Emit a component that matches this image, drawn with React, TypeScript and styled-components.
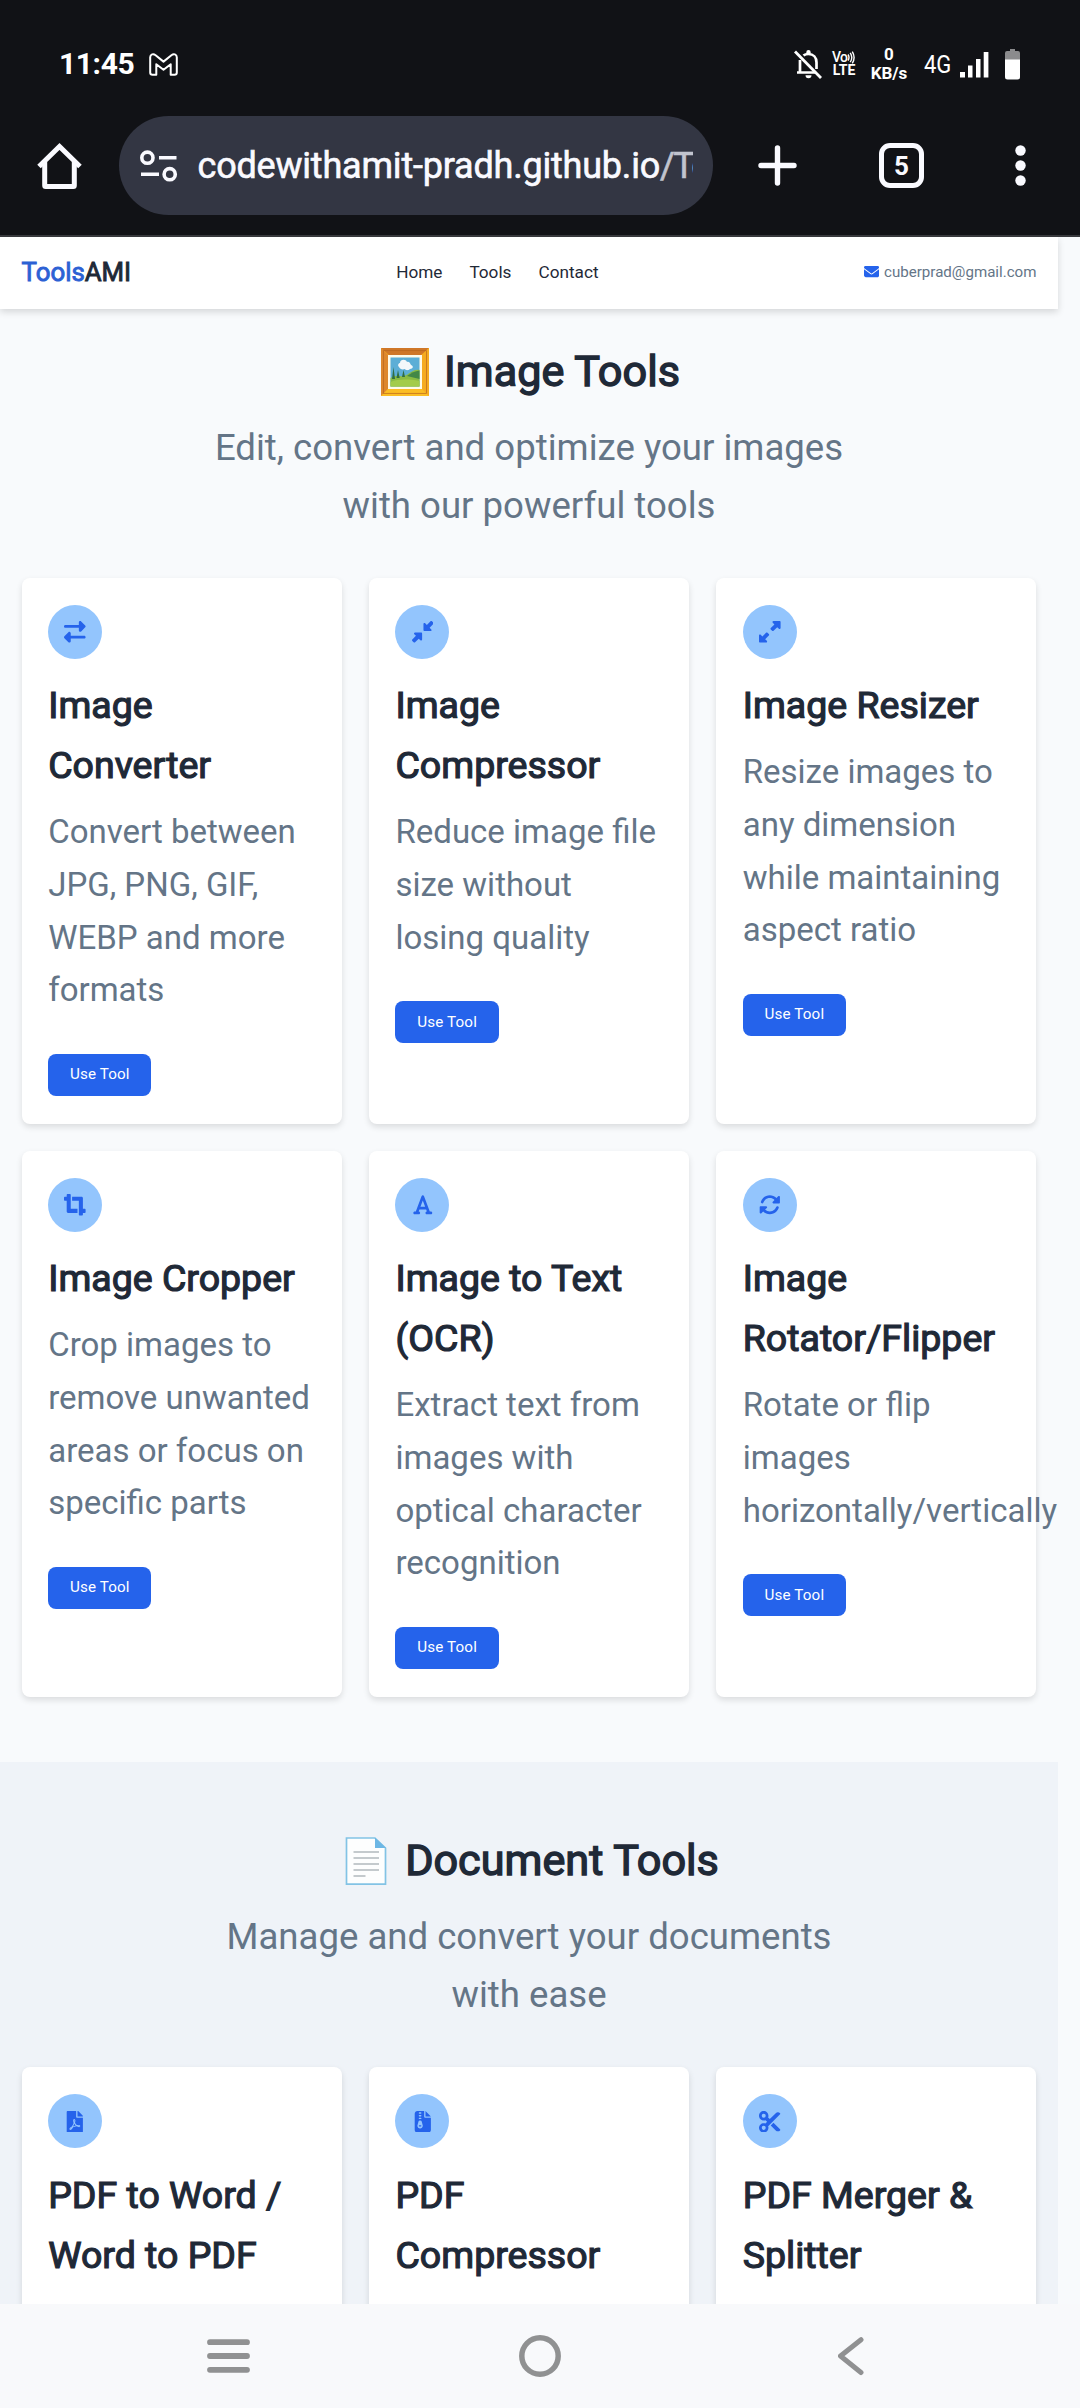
import React from "react";
import styled, { createGlobalStyle } from "styled-components";
import { FaCropAlt, FaFilePdf } from "react-icons/fa";
import {
  FaRightLeft,
  FaDownLeftAndUpRightToCenter,
  FaUpRightAndDownLeftFromCenter,
  FaFont,
  FaRotate,
  FaFileZipper,
  FaScissors,
  FaEnvelope,
} from "react-icons/fa6";

const GlobalStyle = createGlobalStyle`
  *, *::before, *::after { box-sizing: border-box; }
  body { margin: 0; background: #f8fafc; font-family: Roboto, "Liberation Sans", sans-serif; }
  h1, h2, h3, p { margin: 0; font-weight: 400; }
  svg { display: block; flex: none; }
`;

const Screen = styled.div`
  display: flex;
  flex-direction: column;
  width: 1080px;
  height: 2408px;
  overflow: hidden;
  background: #f8fafc;
`;

const BrowserChrome = styled.div`
  flex: none;
  height: 237px;
  background: #111216;
  border-bottom: 2px solid #37383c;
  color: #fff;
`;

const StatusBar = styled.div`
  display: flex;
  align-items: center;
  height: 116px;
  padding: 12px 60px 0 59px;
`;

const Clock = styled.span`
  font-size: 30px;
  font-weight: 700;
  line-height: 30px;
  width: 90px;
  letter-spacing: -0.4px;
`;

const StatusIcons = styled.div`
  display: flex;
  align-items: center;
  margin-left: auto;
`;

const Stack = styled.div<{ $width: number; $size: number; $line: number; $left: number }>`
  display: flex;
  flex-direction: column;
  align-items: center;
  width: ${(p) => p.$width}px;
  margin-left: ${(p) => p.$left}px;
  font-size: ${(p) => p.$size}px;
  line-height: ${(p) => p.$line}px;
  font-weight: 700;
  white-space: nowrap;
`;

const VoRow = styled.span`
  display: flex;
  align-items: center;
  align-self: flex-start;
  letter-spacing: -0.7px;
`;

const VoLabel = styled.span`
  font-size: 14px;
  font-weight: 500;
`;

const LteLabel = styled.span`
  font-size: 14px;
  font-weight: 700;
`;

const Network = styled.span`
  margin-left: 16px;
  width: 36px;
  font-size: 26.5px;
  line-height: 30px;
  transform: scaleX(0.83);
  transform-origin: left center;
`;

const Toolbar = styled.div`
  display: flex;
  align-items: center;
  height: 99px;
  padding-left: 37px;
`;

const UrlPill = styled.div`
  display: flex;
  align-items: center;
  width: 594px;
  height: 99px;
  margin-left: 37px;
  padding: 0 20px 0 21px;
  border-radius: 50px;
  background: #333643;
`;

const UrlText = styled.div`
  width: 495px;
  margin-left: 19.5px;
  overflow: hidden;
  white-space: nowrap;
  font-size: 36px;
  line-height: 50px;
  letter-spacing: -0.2px;
  color: #fafaff;
  -webkit-text-stroke: 0.6px currentColor;
`;

const UrlPath = styled.span`
  color: #c1c4ce;
  letter-spacing: -1.7px;
`;

const TabCount = styled.div`
  display: flex;
  align-items: center;
  justify-content: center;
  width: 45px;
  height: 45px;
  margin-left: 82px;
  border: 5px solid #fafaff;
  border-radius: 11px;
  font-size: 26px;
  font-weight: 700;
  line-height: 26px;
  color: #fafaff;
`;

const Viewport = styled.main`
  flex: none;
  height: 2067px;
  width: 1080px;
  overflow: hidden;
`;

const SiteHeader = styled.header`
  display: flex;
  align-items: center;
  justify-content: space-between;
  position: relative;
  width: 1058px;
  height: 72px;
  padding: 0 21.6px 3px;
  background: #fff;
  box-shadow: 0 3px 7px rgba(0, 0, 0, 0.14);
`;

const Logo = styled.div`
  font-size: 25.8px;
  line-height: 36px;
  color: #1f2937;
  -webkit-text-stroke: 0.9px currentColor;
`;

const LogoAccent = styled.span`
  color: #2c61d4;
`;

const Nav = styled.nav`
  display: flex;
  gap: 27px;
  font-size: 17.2px;
  line-height: 28px;
  color: #1f2937;
`;

const Contact = styled.div`
  display: flex;
  align-items: center;
  gap: 5.4px;
  font-size: 15.1px;
  line-height: 24px;
  color: #647587;
`;

const Section = styled.section<{ $tinted?: boolean }>`
  width: 1058px;
  padding: ${(p) => (p.$tinted ? "64px" : "28px")} 21.6px 65.4px;
  background: ${(p) => (p.$tinted ? "#eff3f8" : "transparent")};
`;

const SectionTitle = styled.h2`
  display: flex;
  align-items: center;
  justify-content: center;
  gap: 13px;
  height: 69px;
  font-size: 43.2px;
  line-height: 69px;
  color: #1f2937;
  -webkit-text-stroke: 1.4px currentColor;
`;

const SectionText = styled.p`
  width: 660px;
  margin: 12.5px auto 42.5px;
  text-align: center;
  font-size: 36.6px;
  line-height: 58.5px;
  color: #647587;
`;

const Grid = styled.div`
  display: grid;
  grid-template-columns: repeat(3, 320.27px);
  gap: 27px;
`;

const CardBox = styled.article`
  display: flex;
  flex-direction: column;
  align-items: flex-start;
  min-height: 546px;
  padding: 27px 26.6px;
  border-radius: 8px;
  background: #fff;
  box-shadow: 0 3px 6px rgba(0, 0, 0, 0.12);
`;

const IconCircle = styled.div`
  display: flex;
  align-items: center;
  justify-content: center;
  width: 54px;
  height: 54px;
  margin-bottom: 16.2px;
  border-radius: 50%;
  background: #93c5fd;
  color: #2563eb;
  font-size: 21.6px;
`;

const CardTitle = styled.h3`
  margin-bottom: 11px;
  font-size: 37.5px;
  line-height: 60px;
  color: #1f2937;
  -webkit-text-stroke: 1.2px currentColor;
`;

const CardText = styled.p`
  width: 266px;
  font-size: 33px;
  line-height: 52.7px;
  color: #647587;
`;

const UseButton = styled.button`
  width: 103.3px;
  height: 41.6px;
  margin-top: 37px;
  padding: 0 0 1px;
  border: 0;
  border-radius: 8px;
  background: #2563eb;
  color: #fff;
  font-family: inherit;
  font-size: 15.2px;
  letter-spacing: 0.15px;
`;

const NavBar = styled.footer`
  display: grid;
  flex: none;
  grid-template-columns: repeat(3, 312px);
  place-items: center;
  justify-content: center;
  height: 104px;
  background: #f8f9fb;
`;

const GmailIcon = () => (
  <svg width="29" height="23" viewBox="0 0 29 23" fill="none" stroke="#fff" strokeWidth="2" strokeLinejoin="round">
    <path d="M1.2 4.2C1.2 1.2 4.4.4 6.3 2l8.2 6.6L22.700 2c1.900-1.600 5.100-.8 5.100 2.200v15.300c0 1.400-.9 2.300-2.300 2.300h-3.800V11.200l-7.200 5.600-7.200-5.600v10.600H3.500c-1.400 0-2.300-.9-2.300-2.300z" />
  </svg>
);

const BellOffIcon = () => (
  <svg width="30" height="31" viewBox="0 0 30 31" fill="none" stroke="#fff" strokeWidth="2.700">
    <path d="M2 2.500 28 29" strokeWidth="2.800" />
    <path d="M7 11v12M4 23.500h19M10.500 6.600C11.700 5.500 13.300 5 15.500 5c4.800 0 8 3.500 8 8.500V20" />
    <path d="M13.300 4.500V3.200a2.200 2.200 0 0 1 4.400 0v1.300zM12.500 26.300h6a3 3 0 0 1-6 0z" fill="#fff" stroke="none" />
  </svg>
);

const SoundWaves = () => (
  <svg width="8" height="13" viewBox="0 0 8 13" fill="none" stroke="#fff" strokeWidth="1.400">
    <path d="M1 3.500q2 3 0 6M3.200 1.800q3.200 4.700 0 9.400M5.300.6q3.600 6 0 11.800" />
  </svg>
);

const SignalIcon = () => (
  <svg width="29" height="27" viewBox="0 0 29 27" fill="#fff">
    <rect x="0" y="21" width="5" height="5.500" />
    <rect x="8" y="14.500" width="4.500" height="12" />
    <rect x="16" y="8" width="4.500" height="18.500" />
    <rect x="23.700" y="1" width="4.700" height="25.500" />
  </svg>
);

const BatteryIcon = () => (
  <svg width="15" height="31" viewBox="0 0 15 31">
    <path d="M5 0h5v2h3a2 2 0 0 1 2 2v7H0V4a2 2 0 0 1 2-2h3z" fill="#8b8b8d" />
    <path d="M0 10.500h15V28a2.500 2.500 0 0 1-2.500 2.500h-10A2.500 2.500 0 0 1 0 28z" fill="#fff" />
  </svg>
);

const HomeIcon = () => (
  <svg width="45" height="46" viewBox="0 0 45 46" fill="none" stroke="#fafaff" strokeWidth="5" strokeLinejoin="round">
    <path d="M2 23.500 22.500 3.500 43 23.500" strokeLinejoin="miter" />
    <path d="M7.700 19v23.500a1 1 0 0 0 1 1h27.600a1 1 0 0 0 1-1V19" />
  </svg>
);

const TuneIcon = () => (
  <svg width="38" height="34" viewBox="0 0 38 34" fill="none" stroke="#fafaff" strokeWidth="3.600">
    <circle cx="7.400" cy="8.700" r="5.600" />
    <path d="M19 8.700h17.500M1 25.200h18" />
    <circle cx="29.700" cy="25.200" r="5.600" />
  </svg>
);

const PlusIcon = styled.svg`
  margin-left: 45px;
`;

const DotsIcon = styled.svg`
  margin-left: 91px;
`;

const FrameEmoji = () => (
  <svg width="53" height="50" viewBox="0 0 53 50">
    <rect x="3" y="1" width="48" height="48" fill="#f2a51e" />
    <path d="M3 1h48l-8 7H11z" fill="#cf7728" />
    <path d="M3 1l7 7v34l-7 7z" fill="#dd872d" />
    <path d="M51 1v48l-7-7V8z" fill="#f5ab20" />
    <path d="M3 49l7-7h34l7 7z" fill="#fbbd24" />
    <rect x="5.500" y="3.700" width="43" height="42.600" fill="none" stroke="#b8651e" strokeWidth=".7" />
    <rect x="10" y="8" width="34" height="34" fill="#fffbe9" />
    <rect x="12.500" y="10.500" width="29" height="29" fill="#5caed6" />
    <path d="M12.500 31c6-4 11 0 16-3 4-2 7-6 13-5v16.500h-29z" fill="#8abb43" />
    <path d="M29 29c4-3 8-5 12.500-5.500V32z" fill="#428747" />
    <path d="M14 32l1.500-12L17 32zM18.500 31l1.500-8 1.700 8zM24 30l1.500-7 1.500 7z" fill="#316d43" />
    <path d="M12.500 35c8-3 17-3 29-1v5.500h-29z" fill="#a3cc4a" />
    <path d="M21 20c-2-2 0-4 1-4 0-4 6-4 7-1 3-1 3 2 4 3 3 1 2 4-1 4-2 2-5 1-5 0-3 1-5 0-6-2z" fill="#f3f8fa" />
  </svg>
);

const PageEmoji = () => (
  <svg width="53" height="50" viewBox="0 0 53 50">
    <path d="M7.500 2h28.300L46.500 12v36.200h-39z" fill="#fdfefe" stroke="#82c3e5" strokeWidth="1.700" />
    <path d="M36 1.500 47 12H36z" fill="#6db7e5" />
    <path d="M14.500 16h25.500M14.500 22h25.500M14.500 28h25.500M14.500 34h25.500M14.500 40h12" stroke="#b1b9bd" strokeWidth="1.500" />
  </svg>
);

type Tool = { icon: React.ReactNode; title: string; text?: string };

const imageTools: Tool[] = [
  { icon: <FaRightLeft />, title: "Image Converter", text: "Convert between JPG, PNG, GIF, WEBP and more formats" },
  { icon: <FaDownLeftAndUpRightToCenter />, title: "Image Compressor", text: "Reduce image file size without losing quality" },
  { icon: <FaUpRightAndDownLeftFromCenter />, title: "Image Resizer", text: "Resize images to any dimension while maintaining aspect ratio" },
  { icon: <FaCropAlt />, title: "Image Cropper", text: "Crop images to remove unwanted areas or focus on specific parts" },
  { icon: <FaFont />, title: "Image to Text (OCR)", text: "Extract text from images with optical character recognition" },
  { icon: <FaRotate />, title: "Image Rotator/Flipper", text: "Rotate or flip images horizontally/vertically" },
];

const documentTools: Tool[] = [
  { icon: <FaFilePdf />, title: "PDF to Word / Word to PDF" },
  { icon: <FaFileZipper />, title: "PDF Compressor" },
  { icon: <FaScissors />, title: "PDF Merger & Splitter" },
];

const Card = ({ icon, title, text }: Tool) => (
  <CardBox>
    <IconCircle>{icon}</IconCircle>
    <CardTitle>{title}</CardTitle>
    {text && <CardText>{text}</CardText>}
    {text && <UseButton>Use Tool</UseButton>}
  </CardBox>
);

export default function App() {
  return (
    <Screen>
      <GlobalStyle />
      <BrowserChrome>
        <StatusBar>
          <Clock>11:45</Clock>
          <GmailIcon />
          <StatusIcons>
            <BellOffIcon />
            <Stack $width={24} $size={14} $line={13.4} $left={9}>
              <VoRow>
                <VoLabel>Vo</VoLabel>
                <SoundWaves />
              </VoRow>
              <LteLabel>LTE</LteLabel>
            </Stack>
            <Stack $width={38} $size={17} $line={19.5} $left={14}>
              <span>0</span>
              <span>KB/s</span>
            </Stack>
            <Network>4G</Network>
            <SignalIcon />
          </StatusIcons>
          <Stack $width={15} $size={10} $line={31} $left={16}>
            <BatteryIcon />
          </Stack>
        </StatusBar>
        <Toolbar>
          <HomeIcon />
          <UrlPill>
            <TuneIcon />
            <UrlText>
              codewithamit-pradh.github.io<UrlPath>/To</UrlPath>
            </UrlText>
          </UrlPill>
          <PlusIcon width="39" height="41" viewBox="0 0 39 41" stroke="#fafaff" strokeWidth="5.400" strokeLinecap="round">
            <path d="M19.500 3v35M3 20.500h33" />
          </PlusIcon>
          <TabCount>5</TabCount>
          <DotsIcon width="11" height="41" viewBox="0 0 11 41" fill="#fafaff">
            <circle cx="5.500" cy="5.500" r="5.200" />
            <circle cx="5.500" cy="20.500" r="5.200" />
            <circle cx="5.500" cy="35.500" r="5.200" />
          </DotsIcon>
        </Toolbar>
      </BrowserChrome>

      <Viewport>
        <SiteHeader>
          <Logo>
            <LogoAccent>Tools</LogoAccent>AMI
          </Logo>
          <Nav>
            <span>Home</span>
            <span>Tools</span>
            <span>Contact</span>
          </Nav>
          <Contact>
            <FaEnvelope color="#2563eb" />
            cuberprad@gmail.com
          </Contact>
        </SiteHeader>

        <Section>
          <SectionTitle>
            <FrameEmoji />
            Image Tools
          </SectionTitle>
          <SectionText>Edit, convert and optimize your images with our powerful tools</SectionText>
          <Grid>
            {imageTools.map((tool) => (
              <Card key={tool.title} {...tool} />
            ))}
          </Grid>
        </Section>

        <Section $tinted>
          <SectionTitle>
            <PageEmoji />
            Document Tools
          </SectionTitle>
          <SectionText>Manage and convert your documents with ease</SectionText>
          <Grid>
            {documentTools.map((tool) => (
              <Card key={tool.title} {...tool} />
            ))}
          </Grid>
        </Section>
      </Viewport>

      <NavBar>
        <svg width="43" height="34" viewBox="0 0 43 34" stroke="#909192" strokeWidth="5.800" strokeLinecap="round">
          <path d="M3 3.200h37M3 17h37M3 30.800h37" />
        </svg>
        <svg width="42" height="42" viewBox="0 0 42 42" fill="none" stroke="#909192" strokeWidth="5.500">
          <circle cx="21" cy="21" r="18.200" />
        </svg>
        <svg width="28" height="40" viewBox="0 0 28 40" fill="none" stroke="#909192" strokeWidth="5" strokeLinecap="round" strokeLinejoin="round">
          <path d="M23 3.700 2.500 20 23 36.500" />
        </svg>
      </NavBar>
    </Screen>
  );
}
